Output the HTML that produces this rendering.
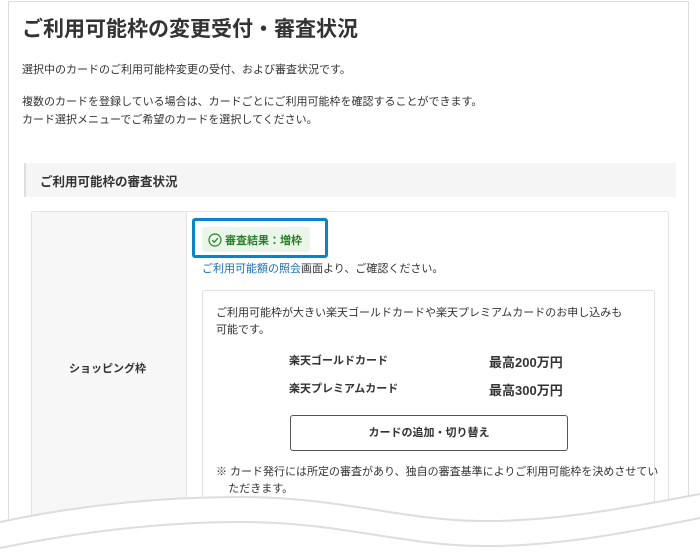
<!DOCTYPE html>
<html style="overflow:hidden;height:558px"><head><meta charset="utf-8"><style>
*{margin:0;padding:0;box-sizing:border-box}
body{width:700px;height:558px;overflow:hidden;background:#fff;font-family:"Liberation Sans","Noto Sans CJK JP",sans-serif;color:#333;position:relative}
.abs{position:absolute}
.frame{left:8px;top:1px;width:681px;height:556px;border:1px solid #ddd;border-bottom:none}
.t{font-size:11px;white-space:nowrap}
</style></head><body>
<div class="abs frame"></div>
<div class="abs" style="left:22px;top:13px;font-size:21px;font-weight:bold;color:#333;white-space:nowrap">ご利用可能枠の変更受付・審査状況</div>
<div class="abs t" style="left:22px;top:61px">選択中のカードのご利用可能枠変更の受付、および審査状況です。</div>
<div class="abs t" style="left:22px;top:93px">複数のカードを登録している場合は、カードごとにご利用可能枠を確認することができます。</div>
<div class="abs t" style="left:22px;top:111px">カード選択メニューでご希望のカードを選択してください。</div>
<div class="abs" style="left:24px;top:163px;width:652px;height:34px;background:#f5f5f5;border-left:2px solid #ddd"></div>
<div class="abs" style="left:40px;top:171px;font-size:12.5px;font-weight:bold;white-space:nowrap">ご利用可能枠の審査状況</div>
<div class="abs" style="left:31px;top:211px;width:638px;height:340px;border:1px solid #e3e3e3;border-bottom:none;border-radius:3px 3px 0 0"></div>
<div class="abs" style="left:32px;top:212px;width:155px;height:339px;background:#f7f7f7;border-right:1px solid #e3e3e3"></div>
<div class="abs" style="left:69px;top:360px;font-size:11px;font-weight:bold;white-space:nowrap">ショッピング枠</div>
<div class="abs" style="left:192px;top:218px;width:136px;height:40px;border:3px solid #0a84c9;border-radius:3px"></div>
<div class="abs" style="left:202px;top:227px;width:108px;height:25px;background:#eaf6ea;border-radius:3px"></div>
<svg class="abs" style="left:208px;top:233px" width="14" height="14" viewBox="0 0 14 14"><circle cx="7" cy="7" r="6" fill="none" stroke="#2a7d2a" stroke-width="1.2"/><path d="M4.2 7.2l2 2 3.6-4" fill="none" stroke="#2a7d2a" stroke-width="1.2"/></svg>
<div class="abs" style="left:225px;top:232px;font-size:11px;font-weight:bold;color:#2a7d2a;white-space:nowrap">審査結果：増枠</div>
<div class="abs t" style="left:202px;top:260px"><span style="color:#1a6fb0">ご利用可能額の照会</span>画面より、ご確認ください。</div>
<div class="abs" style="left:202px;top:290px;width:453px;height:240px;border:1px solid #e0e0e0;border-bottom:none;border-radius:3px 3px 0 0"></div>
<div class="abs t" style="left:216px;top:305px;line-height:17px">ご利用可能枠が大きい楽天ゴールドカードや楽天プレミアムカードのお申し込みも<br>可能です。</div>
<div class="abs" style="left:289px;top:352px;font-size:11px;font-weight:bold;white-space:nowrap">楽天ゴールドカード</div>
<div class="abs" style="left:289px;top:380px;font-size:11px;font-weight:bold;white-space:nowrap">楽天プレミアムカード</div>
<div class="abs" style="left:489px;top:352px;font-size:13px;font-weight:bold;white-space:nowrap">最高200万円</div>
<div class="abs" style="left:489px;top:380px;font-size:13px;font-weight:bold;white-space:nowrap">最高300万円</div>
<div class="abs" style="left:290px;top:415px;width:278px;height:36px;border:1px solid #555;border-radius:3px;font-size:11px;font-weight:bold;text-align:center;line-height:34px">カードの追加・切り替え</div>
<div class="abs t" style="left:216px;top:464px;line-height:17px">※ カード発行には所定の審査があり、独自の審査基準によりご利用可能枠を決めさせてい<br>&nbsp;&nbsp;&nbsp;&nbsp;ただきます。</div>
<svg class="abs" style="left:0;top:480px" width="700" height="78" viewBox="0 480 700 78">
<path d="M0 522 C80 505 160 497 240 497 C340 497 400 520 480 521 C560 522 640 505 700 494 L700 560 L0 560 Z" fill="#fff"/>
<path d="M0 522 C80 505 160 497 240 497 C340 497 400 520 480 521 C560 522 640 505 700 494" fill="none" stroke="#ddd" stroke-width="2"/>
<path d="M0 548 C80 532 160 522 240 522 C340 522 400 545 480 546 C560 547 640 530 700 518" fill="none" stroke="#ddd" stroke-width="2"/>
</svg>
</body></html>
